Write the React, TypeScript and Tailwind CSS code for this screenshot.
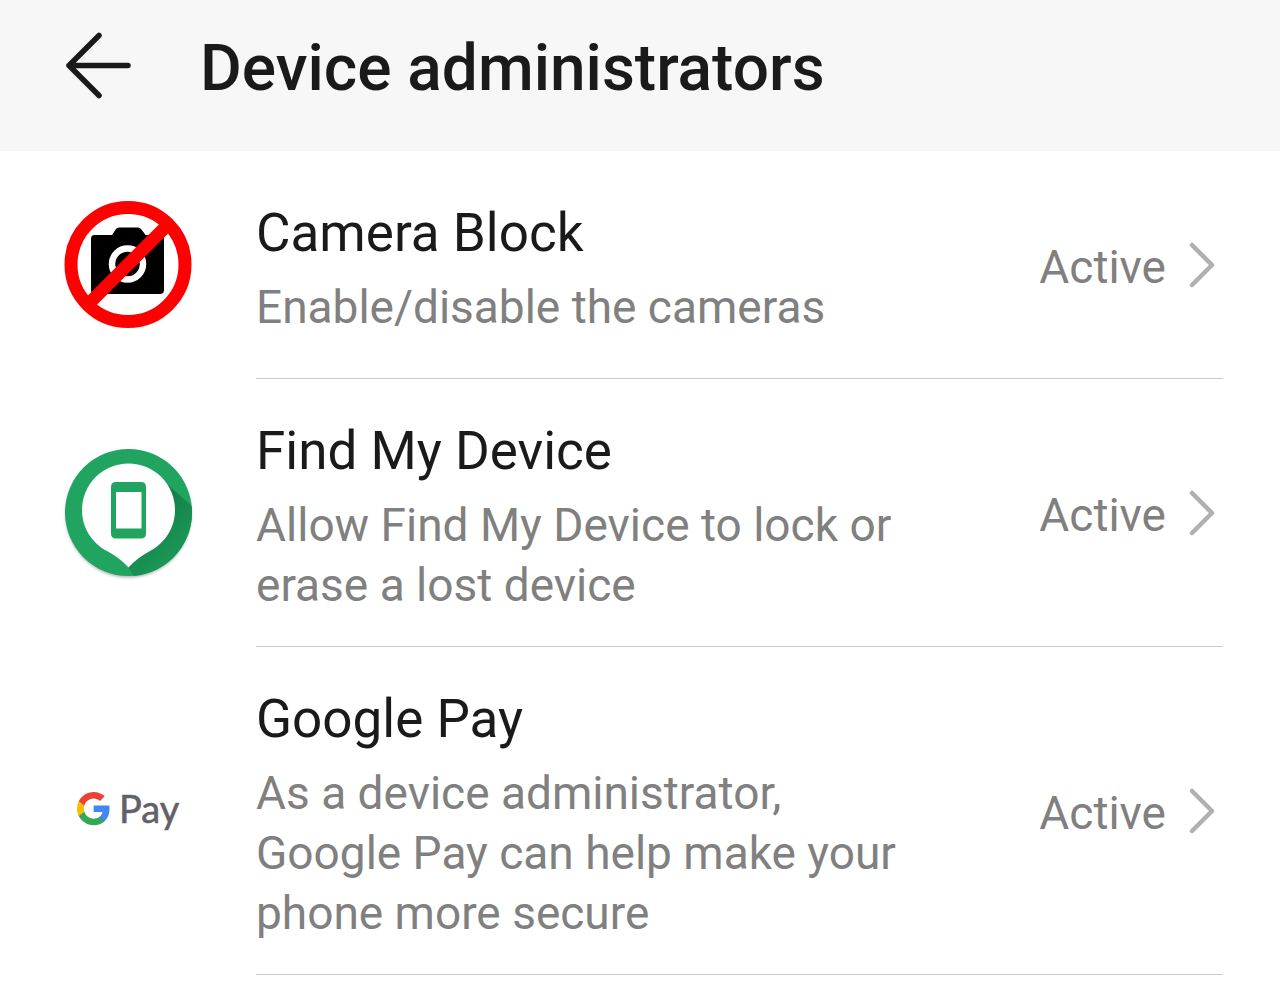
import type { ReactNode } from "react";

function BackArrow() {
  return (
    <svg viewBox="0 0 68 68" className="size-17" fill="none" stroke="#1a1a1a" strokeWidth="5.500" strokeLinecap="round" strokeLinejoin="round" aria-hidden="true">
      <path d="M35 4.500 5 34.500 35 64.500M5 34.500H64" />
    </svg>
  );
}

function Chevron() {
  return (
    <svg viewBox="0 0 28 48" className="h-12 w-7 shrink-0" fill="none" stroke="#b0b0b0" strokeWidth="4.500" strokeLinecap="round" strokeLinejoin="round" aria-hidden="true">
      <path d="M4 4 24 24 4 44" />
    </svg>
  );
}

function CameraBlockIcon() {
  return (
    <svg viewBox="0 0 128 128" className="size-32" aria-hidden="true">
      <path d="M30.500 34H48L52 28Q53 26.500 55 26.500H74Q76 26.500 77.500 28.500L81.500 34H96Q100 34 100 38V89Q100 93 96 93H31Q27 93 27 89V38Q27 34 30.500 34Z" fill="#000" />
      <circle cx="63.500" cy="63" r="15.500" fill="none" stroke="#fff" strokeWidth="6.500" />
      <path d="M23 104.500 105 22.500" stroke="#f00" strokeWidth="13" />
      <circle cx="64" cy="63.500" r="57" fill="none" stroke="#f00" strokeWidth="13" />
    </svg>
  );
}

function FindDeviceIcon() {
  return (
    <svg viewBox="0 0 128 128" className="size-32 overflow-visible" aria-hidden="true">
      <defs>
        <clipPath id="disc">
          <circle cx="64.500" cy="63.500" r="63.500" />
        </clipPath>
        <linearGradient id="shade" gradientUnits="userSpaceOnUse" x1="82" y1="72" x2="112" y2="104">
          <stop offset="0" stopColor="#138249" />
          <stop offset="1" stopColor="#1b9657" />
        </linearGradient>
        <filter id="soft" x="-10%" y="-10%" width="120%" height="125%">
          <feGaussianBlur stdDeviation="1.500" />
        </filter>
      </defs>
      <circle cx="64.500" cy="65.500" r="63" fill="#000" opacity=".3" filter="url(#soft)" />
      <circle cx="64.500" cy="63.500" r="63.500" fill="#22a461" />
      <path clipPath="url(#disc)" d="M102 34 140 68V140H78L64 118Z" fill="url(#shade)" />
      <path d="M64.500 14.500A46.500 46.500 0 0 1 111 61C111 79 101 94 86 102C77 107 70 112 64.500 118.500C59 112 52 107 43 102C28 94 18 79 18 61A46.500 46.500 0 0 1 64.500 14.500Z" fill="#fff" />
      <path fillRule="evenodd" d="M52 33H77Q82 33 82 38V84.500Q82 89.500 77 89.500H52Q47 89.500 47 84.500V38Q47 33 52 33ZM52 43V79.500H77.500V43Z" fill="#22a461" />
    </svg>
  );
}

function GooglePayIcon() {
  return (
    <svg viewBox="0 0 128 128" className="size-32" role="img" aria-label="G Pay">
      <g transform="translate(11.500 43.500) scale(1.510)">
        <path fill="#4285f4" d="M22.560 12.250c0-.78-.07-1.530-.2-2.250H12v4.260h5.920c-.26 1.370-1.040 2.530-2.210 3.310v2.770h3.570c2.080-1.920 3.280-4.740 3.280-8.090z" />
        <path fill="#34a853" d="M12 23c2.970 0 5.460-.98 7.280-2.660l-3.570-2.770c-.98.66-2.230 1.060-3.710 1.060-2.860 0-5.290-1.930-6.160-4.530H2.180v2.840C3.990 20.530 7.700 23 12 23z" />
        <path fill="#fbbc05" d="M5.840 14.090c-.22-.66-.35-1.360-.35-2.090s.13-1.430.35-2.090V7.070H2.180C1.430 8.550 1 10.220 1 12s.43 3.450 1.180 4.930l3.660-2.840z" />
        <path fill="#ea4335" d="M12 5.380c1.620 0 3.060.56 4.210 1.640l3.150-3.150C17.450 2.090 14.970 1 12 1 7.700 1 3.990 3.470 2.180 7.070l3.660 2.840C6.710 7.310 9.140 5.380 12 5.380z" />
      </g>
      <text x="55" y="76" fill="#5f6368" stroke="#5f6368" strokeWidth=".6" fontFamily="Lato, sans-serif" fontSize="38">
        Pay
      </text>
    </svg>
  );
}

type Admin = { name: string; description: string; status: string; icon: ReactNode };

const admins: Admin[] = [
  { name: "Camera Block", description: "Enable/disable the cameras", status: "Active", icon: <CameraBlockIcon /> },
  { name: "Find My Device", description: "Allow Find My Device to lock or erase a lost device", status: "Active", icon: <FindDeviceIcon /> },
  { name: "Google Pay", description: "As a device administrator, Google Pay can help make your phone more secure", status: "Active", icon: <GooglePayIcon /> },
];

function AdminRow({ name, description, status, icon }: Admin) {
  return (
    <li>
      <a href="#" className="flex pl-16">
        <span className="flex w-32 shrink-0 items-center pb-px">{icon}</span>
        <span className="mr-[57px] ml-16 flex min-h-[228px] flex-1 items-center border-b border-[#c9c9c9]">
          <span className="flex flex-1 flex-col gap-3 pt-10 pb-[31px]">
            <span className="text-[53px] leading-16 text-[#1a1a1a]">{name}</span>
            <span className="text-[46px] leading-15 text-[#808080]">{description}</span>
          </span>
          <span className="flex shrink-0 items-center gap-[22px] pr-[7px] pl-29">
            <span className="pt-1 text-[46px] leading-15 text-[#808080]">{status}</span>
            <Chevron />
          </span>
        </span>
      </a>
    </li>
  );
}

export default function App() {
  return (
    <div className="min-h-screen bg-white font-['Roboto',sans-serif]">
      <header className="flex items-start gap-17 bg-[#f7f7f7] px-16 pt-[25px] pb-[38px]">
        <button type="button" aria-label="Back" className="shrink-0 pt-1.5">
          <BackArrow />
        </button>
        <h1 className="text-[64px] leading-22 font-medium text-[#1a1a1a]">Device administrators</h1>
      </header>
      <main>
        <ul>
          {admins.map((admin) => (
            <AdminRow key={admin.name} {...admin} />
          ))}
        </ul>
      </main>
    </div>
  );
}
